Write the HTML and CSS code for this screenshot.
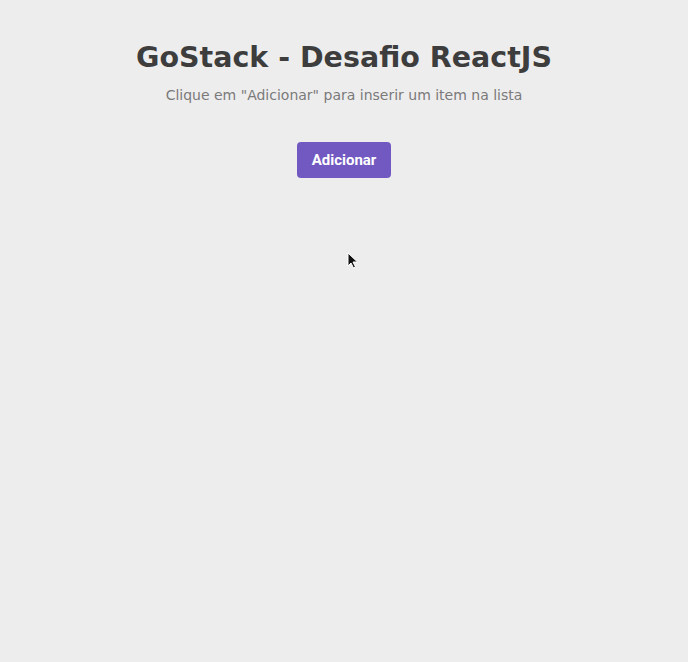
FILE: index.html
```html
<!DOCTYPE html>
<html lang="pt-BR">
<head>
<meta charset="utf-8">
<title>GoStack - Desafio ReactJS</title>
<link rel="stylesheet" href="styles.css">
</head>
<body>
<main class="app">
  <header class="header">
    <h1 class="title">GoStack - Desafio ReactJS</h1>
    <p class="subtitle">Clique em "Adicionar" para inserir um item na lista</p>
  </header>
  <ul class="list"></ul>
  <button class="add-button" type="button">Adicionar</button>
</main>
<svg class="cursor" width="12" height="18" viewBox="0 0 12 18" aria-hidden="true">
  <path d="M1 1 L1 14 L4 11 L6.5 16 L8.5 15 L6 10 L10.5 10 Z" fill="#111" stroke="#fff" stroke-width="1"/>
</svg>
</body>
</html>
```
FILE: styles.css
```css
html, body {
  margin: 0;
  padding: 0;
}
body {
  background: #eeedee;
  min-height: 662px;
  font-family: "DejaVu Sans", Verdana, sans-serif;
  position: relative;
}
.app {
  display: flex;
  flex-direction: column;
  align-items: center;
  padding-top: 41px;
}
.header {
  text-align: center;
}
.title {
  margin: 0;
  font-size: 28.5px;
  font-weight: bold;
  color: #3d3d3d;
  line-height: 34px;
}
.subtitle {
  margin: 11px 0 0;
  font-size: 14px;
  color: #7a7a7a;
  line-height: 18px;
}
.list {
  margin: 0;
  padding: 0;
  list-style: none;
  height: 38px;
}
.add-button {
  width: 94px;
  height: 36px;
  border: 0;
  border-radius: 4px;
  background: #7159c1;
  color: #fff;
  font-family: Roboto, "Liberation Sans", sans-serif;
  font-weight: bold;
  font-size: 15px;
  cursor: pointer;
}
.cursor {
  position: absolute;
  left: 347px;
  top: 252px;
}
```
